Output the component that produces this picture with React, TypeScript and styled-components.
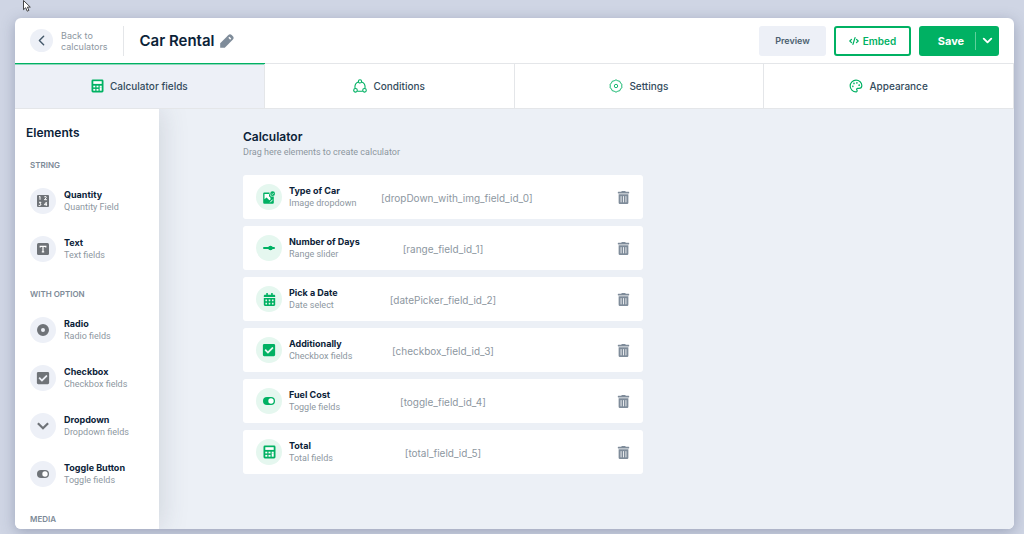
import React from "react";
import styled, { createGlobalStyle } from "styled-components";
import { ChevronDown, ChevronLeft, CodeXml, Palette } from "lucide-react";
import { FaCalendarAlt, FaCheckSquare, FaTrashAlt } from "react-icons/fa";

const color = {
  ink: "#0b2238",
  text: "#334b5c",
  muted: "#8d979f",
  label: "#7d8a97",
  green: "#00b163",
  mint: "#e5f7ef",
  mist: "#edf0f7",
  canvas: "#ecf0f6",
  line: "#e4e6e9",
  iconGray: "#6f7378",
};

const GlobalStyle = createGlobalStyle`
  *, *::before, *::after { box-sizing: border-box; }
  body {
    margin: 0;
    background: #cfd5e4;
    color: ${color.ink};
    font-family: Inter, "Liberation Sans", sans-serif;
  }
  h1, h2, h3, p, ul { margin: 0; padding: 0; }
  ul { list-style: none; }
  button { font-family: inherit; cursor: pointer; }
  a { color: inherit; text-decoration: none; }
  svg { display: block; flex: none; }
`;

const Page = styled.div`
  display: flex;
  height: 100vh;
  padding: 18px 10px 5px 15px;
`;

const Panel = styled.div`
  flex: 1;
  min-width: 0;
  display: flex;
  flex-direction: column;
  overflow: hidden;
  border-radius: 6px;
  background: #fff;
  box-shadow: 0 3px 14px rgba(70, 80, 115, 0.36);
`;

const Header = styled.header`
  display: flex;
  align-items: center;
  height: 46px;
  flex: none;
  padding: 0 15px;
  border-bottom: 1px solid ${color.line};
`;

const BackLink = styled.a`
  display: flex;
  align-items: center;
  gap: 8px;
  height: 30px;
  padding-right: 15px;
  border-right: 1px solid ${color.line};
  color: ${color.muted};
  font-size: 9px;
  line-height: 11px;
`;

const BackCircle = styled.span`
  display: grid;
  place-items: center;
  width: 23px;
  height: 23px;
  border-radius: 50%;
  background: ${color.mist};
  color: #45596b;
`;

const Title = styled.h1`
  margin-left: 16px;
  font-size: 15px;
  line-height: 20px;
  font-weight: 600;
`;

const IconButton = styled.button`
  display: grid;
  place-items: center;
  padding: 0;
  border: 0;
  background: none;
  color: #7f8c9a;
`;

const RenameButton = styled(IconButton)`
  margin-left: 5px;
`;

const Actions = styled.div`
  display: flex;
  gap: 8px;
  margin-left: auto;
`;

const Button = styled.button<{ $outline?: boolean }>`
  display: flex;
  align-items: center;
  justify-content: center;
  gap: 4px;
  width: ${(p) => (p.$outline ? 77 : 67)}px;
  height: 30px;
  padding: 0;
  border: ${(p) => (p.$outline ? `2px solid ${color.green}` : "0")};
  border-radius: 3px;
  background: ${(p) => (p.$outline ? "#fff" : color.mist)};
  color: ${(p) => (p.$outline ? color.green : "#4b6070")};
  font-size: ${(p) => (p.$outline ? 10 : 9)}px;
  line-height: 12px;
  font-weight: 600;
`;

const SplitButton = styled.div`
  display: flex;
  align-items: center;
  width: 80px;
  height: 30px;
  border-radius: 3px;
  background: ${color.green};
`;

const SaveButton = styled.button`
  flex: 1;
  height: 18px;
  padding: 0 0 0 8px;
  border: 0;
  border-right: 1px solid #5fd09b;
  background: none;
  color: #fff;
  font-size: 11px;
  line-height: 16px;
  font-weight: 700;
`;

const SaveMenuButton = styled(IconButton)`
  width: 23px;
  height: 30px;
  color: #fff;
`;

const Tabs = styled.nav`
  display: flex;
  flex: none;
`;

const Tab = styled.a<{ $active?: boolean }>`
  flex: 1;
  display: flex;
  align-items: center;
  justify-content: center;
  gap: 6px;
  height: 45px;
  border-right: 1px solid ${color.line};
  border-bottom: 1px solid ${color.line};
  background: ${(p) => (p.$active ? color.mist : "#fff")};
  box-shadow: ${(p) => (p.$active ? `0 -1px 0 ${color.green}, inset 0 1px 0 rgba(0, 177, 99, 0.4)` : "none")};
  color: ${color.text};
  font-size: 10px;
  line-height: 14px;
  font-weight: 500;

  svg { color: ${color.green}; }
`;

const Body = styled.div`
  flex: 1;
  display: flex;
  min-height: 0;
  overflow: hidden;
`;

const Sidebar = styled.aside`
  position: relative;
  width: 144px;
  flex: none;
  padding: 15px 0 0 15px;
  background: #fff;
  box-shadow: 2px 0 26px rgba(60, 70, 90, 0.17);
`;

const SidebarTitle = styled.h2`
  margin-left: -4px;
  font-size: 12px;
  line-height: 18px;
  font-weight: 600;
`;

const Section = styled.section`
  padding-top: 17px;

  & + & { padding-top: 26px; }
`;

const SectionTitle = styled.h3`
  color: ${color.label};
  font-size: 8px;
  line-height: 12px;
  font-weight: 600;
  text-transform: uppercase;
`;

const ElementList = styled.ul`
  display: flex;
  flex-direction: column;
  gap: 22px;
  padding-top: 17px;
`;

const ElementItem = styled.li`
  display: flex;
  align-items: center;
  gap: 8px;
  height: 26px;
  cursor: grab;
`;

const IconCircle = styled.span<{ $green?: boolean }>`
  display: grid;
  place-items: center;
  flex: none;
  width: 26px;
  height: 26px;
  border-radius: 50%;
  background: ${(p) => (p.$green ? color.mint : color.mist)};
  color: ${(p) => (p.$green ? color.green : color.iconGray)};
`;

const Name = styled.p`
  font-size: 9px;
  line-height: 12px;
  font-weight: 700;
  white-space: nowrap;
`;

const Kind = styled.p`
  color: ${color.muted};
  font-family: Roboto, "Liberation Sans", sans-serif;
  font-size: 9px;
  line-height: 12px;
  white-space: nowrap;
`;

const Main = styled.main`
  flex: 1;
  min-width: 0;
  padding: 19px 84px 0;
  background: ${color.canvas};
`;

const MainTitle = styled(SidebarTitle)`
  margin-left: 0;
`;

const CardList = styled.ul`
  display: flex;
  flex-direction: column;
  gap: 7px;
  max-width: 400px;
  margin-top: 17px;
`;

const Card = styled.li`
  display: flex;
  align-items: center;
  height: 44px;
  padding: 0 13px;
  border-radius: 3px;
  background: #fff;
`;

const CardInfo = styled.div`
  width: 92px;
  flex: none;
  margin-left: 7px;
`;

const FieldId = styled.span`
  min-width: 124px;
  padding-top: 2px;
  color: ${color.muted};
  font-size: 10px;
  line-height: 12px;
  text-align: center;
`;

const DeleteButton = styled(IconButton)`
  margin-left: auto;
`;

const Cursor = styled.svg`
  position: absolute;
  top: 0;
  left: 22px;
`;

const PencilIcon = () => (
  <svg width="14" height="14" viewBox="0 0 14 14" aria-hidden="true">
    <path d="M.2 13.800V9.200L8.400 1.100Q10 -.4 11.700 1.100L12.900 2.300Q14.400 4 12.900 5.600L4.800 13.800Z" fill="currentColor" />
    <path d="M8.900 3.300L10.700 5.100" stroke="#fff" strokeWidth="1.500" />
  </svg>
);

const CalculatorIcon = () => (
  <svg width="13" height="14" viewBox="0 0 13 14" aria-hidden="true">
    <rect x="0.5" y="0.5" width="12" height="13" rx="1.4" fill="currentColor" />
    <g fill="#fff">
      <rect x="2.3" y="2.2" width="8.4" height="2.7" />
      <rect x="2.3" y="6.7" width="2" height="1.7" />
      <rect x="5.5" y="6.7" width="2" height="1.7" />
      <rect x="8.7" y="6.7" width="2" height="1.7" />
      <rect x="2.3" y="9.9" width="2" height="1.8" />
      <rect x="5.5" y="9.9" width="2" height="1.8" />
      <rect x="8.7" y="8.4" width="2" height="3.3" />
    </g>
  </svg>
);

const ConditionsIcon = () => (
  <svg width="14" height="14" viewBox="0 0 14 14" fill="none" stroke="currentColor" strokeWidth="1.1" aria-hidden="true">
    <circle cx="7" cy="2.4" r="1.6" />
    <circle cx="2.5" cy="11.3" r="1.8" />
    <circle cx="11.5" cy="11.3" r="1.8" />
    <path d="M5.300 3C2.900 3.900 1.600 6.500 2 9.400M8.700 3c2.400.9 3.700 3.500 3.300 6.400M4.300 12.200h5.400" />
  </svg>
);

const SettingsIcon = () => (
  <svg width="14" height="14" viewBox="0 0 14 14" fill="none" stroke="currentColor" strokeWidth="0.9" aria-hidden="true">
    <path d="M5.200 1.800Q7 -.2 8.800 1.800Q11.500 1.600 11.600 4.300Q13.900 5 12.700 7Q13.900 9 11.600 9.700Q11.500 12.400 8.800 12.200Q7 14.200 5.200 12.200Q2.500 12.400 2.400 9.700Q.1 9 1.300 7Q.1 5 2.400 4.300Q2.500 1.600 5.200 1.800Z" />
    <circle cx="7" cy="7" r="1.7" />
  </svg>
);

const QuantityIcon = () => (
  <svg width="12" height="12" viewBox="0 0 12 12" aria-hidden="true">
    <rect width="12" height="12" rx="1" fill="currentColor" />
    <path
      d="M2 2l1-.6v3.400M7.300 1.800q2.400-.8 2 .8L7.400 4.700h2.500M2 7.300h2L3 8.600q1.500.3.7 1.500-.7.800-2 .3M9.300 10.800V7.200L7.300 9.700h2.800"
      fill="none"
      stroke="#fff"
      strokeWidth="1"
    />
  </svg>
);

const TextIcon = () => (
  <svg width="12" height="12" viewBox="0 0 12 12" aria-hidden="true">
    <rect width="12" height="12" rx="1.5" fill="currentColor" />
    <path d="M3.200 4.600V3.300h5.600v1.300M6 3.300v5.400M4.800 8.900h2.400" fill="none" stroke="#fff" strokeWidth="1.200" />
  </svg>
);

const RadioIcon = () => (
  <svg width="12" height="12" viewBox="0 0 12 12" aria-hidden="true">
    <circle cx="6" cy="6" r="4" fill="none" stroke="currentColor" strokeWidth="4" />
  </svg>
);

const ToggleIcon = () => (
  <svg width="12" height="12" viewBox="0 0 12 12" aria-hidden="true">
    <rect y="2" width="12" height="8" rx="4" fill="currentColor" />
    <circle cx="8" cy="6" r="2.700" fill="#fff" />
  </svg>
);

const RangeIcon = () => (
  <svg width="12" height="12" viewBox="0 0 12 12" aria-hidden="true">
    <path d="M1 6h10" stroke="currentColor" strokeWidth="2" strokeLinecap="round" />
    <circle cx="7.500" cy="6" r="2.300" fill="currentColor" />
  </svg>
);

const ImageIcon = () => (
  <svg width="12" height="13" viewBox="0 0 12 13" aria-hidden="true">
    <path d="M1.300 1.500H6.500V3L7.800 5.500H10.800V11.700Q10.800 12.700 9.800 12.700H1.300Q.2 12.700 .2 11.700V2.600Q.2 1.500 1.300 1.500Z" fill="currentColor" />
    <path d="M1.500 3H6v2.300l1.500 1.500v1.600L6.300 9.300 3.600 6.500 1.500 8.300Z" fill="#fff" />
    <path d="M7.200 11.300L9.600 8.700" stroke="#fff" />
    <circle cx="9.600" cy="2.700" r="2.400" fill="currentColor" />
    <path d="M8.500 2.700l.8.800 1.400-1.500" fill="none" stroke="#fff" strokeWidth="0.700" />
  </svg>
);

const ChevronIcon = () => (
  <svg width="12" height="8" viewBox="0 0 12 8" aria-hidden="true">
    <path d="M.9 1.200L6 6.200L11.100 1.200" fill="none" stroke="currentColor" strokeWidth="2.200" />
  </svg>
);
const CheckIcon = () => <FaCheckSquare size={14} />;
const CalendarIcon = () => <FaCalendarAlt size={13} />;

type Icon = React.ComponentType;

const tabs: { label: string; icon: React.ReactNode }[] = [
  { label: "Calculator fields", icon: <CalculatorIcon /> },
  { label: "Conditions", icon: <ConditionsIcon /> },
  { label: "Settings", icon: <SettingsIcon /> },
  { label: "Appearance", icon: <Palette size={14} /> },
];

const sections: { title: string; items: [string, string, Icon][] }[] = [
  {
    title: "String",
    items: [
      ["Quantity", "Quantity Field", QuantityIcon],
      ["Text", "Text fields", TextIcon],
    ],
  },
  {
    title: "With option",
    items: [
      ["Radio", "Radio fields", RadioIcon],
      ["Checkbox", "Checkbox fields", CheckIcon],
      ["Dropdown", "Dropdown fields", ChevronIcon],
      ["Toggle Button", "Toggle fields", ToggleIcon],
    ],
  },
  { title: "Media", items: [] },
];

const fields: [string, string, string, Icon][] = [
  ["Type of Car", "Image dropdown", "[dropDown_with_img_field_id_0]", ImageIcon],
  ["Number of Days", "Range slider", "[range_field_id_1]", RangeIcon],
  ["Pick a Date", "Date select", "[datePicker_field_id_2]", CalendarIcon],
  ["Additionally", "Checkbox fields", "[checkbox_field_id_3]", CheckIcon],
  ["Fuel Cost", "Toggle fields", "[toggle_field_id_4]", ToggleIcon],
  ["Total", "Total fields", "[total_field_id_5]", CalculatorIcon],
];

export default function App() {
  return (
    <>
      <GlobalStyle />
      <Page>
        <Panel>
          <Header>
            <BackLink href="#calculators">
              <BackCircle>
                <ChevronLeft size={17} />
              </BackCircle>
              <span>
                Back to
                <br />
                calculators
              </span>
            </BackLink>
            <Title>Car Rental</Title>
            <RenameButton type="button" aria-label="Rename calculator">
              <PencilIcon />
            </RenameButton>
            <Actions>
              <Button type="button">Preview</Button>
              <Button type="button" $outline>
                <CodeXml size={10} strokeWidth={3} />
                Embed
              </Button>
              <SplitButton>
                <SaveButton type="button">Save</SaveButton>
                <SaveMenuButton type="button" aria-label="More save options">
                  <ChevronDown size={15} strokeWidth={3} />
                </SaveMenuButton>
              </SplitButton>
            </Actions>
          </Header>
          <Tabs>
            {tabs.map((tab, i) => (
              <Tab key={tab.label} href={`#tab-${i}`} $active={i === 0} aria-current={i === 0 ? "page" : undefined}>
                {tab.icon}
                {tab.label}
              </Tab>
            ))}
          </Tabs>
          <Body>
            <Sidebar>
              <SidebarTitle>Elements</SidebarTitle>
              {sections.map((section) => (
                <Section key={section.title}>
                  <SectionTitle>{section.title}</SectionTitle>
                  {section.items.length > 0 && (
                    <ElementList>
                      {section.items.map(([name, kind, ItemIcon]) => (
                        <ElementItem key={name}>
                          <IconCircle>
                            <ItemIcon />
                          </IconCircle>
                          <div>
                            <Name>{name}</Name>
                            <Kind>{kind}</Kind>
                          </div>
                        </ElementItem>
                      ))}
                    </ElementList>
                  )}
                </Section>
              ))}
            </Sidebar>
            <Main>
              <MainTitle>Calculator</MainTitle>
              <Kind>Drag here elements to create calculator</Kind>
              <CardList>
                {fields.map(([name, kind, id, FieldIcon]) => (
                  <Card key={id}>
                    <IconCircle $green>
                      <FieldIcon />
                    </IconCircle>
                    <CardInfo>
                      <Name>{name}</Name>
                      <Kind>{kind}</Kind>
                    </CardInfo>
                    <FieldId>{id}</FieldId>
                    <DeleteButton type="button" aria-label={`Delete ${name}`}>
                      <FaTrashAlt size={13} />
                    </DeleteButton>
                  </Card>
                ))}
              </CardList>
            </Main>
          </Body>
        </Panel>
      </Page>
      <Cursor width="10" height="13" viewBox="0 0 10 13" aria-hidden="true">
        <path d="M1.500 .5V9.700L3.700 7.700 5.200 11.200 6.900 10.400 5.400 7.100H8.300Z" fill="#fff" stroke="#333" strokeWidth="0.900" />
      </Cursor>
    </>
  );
}
